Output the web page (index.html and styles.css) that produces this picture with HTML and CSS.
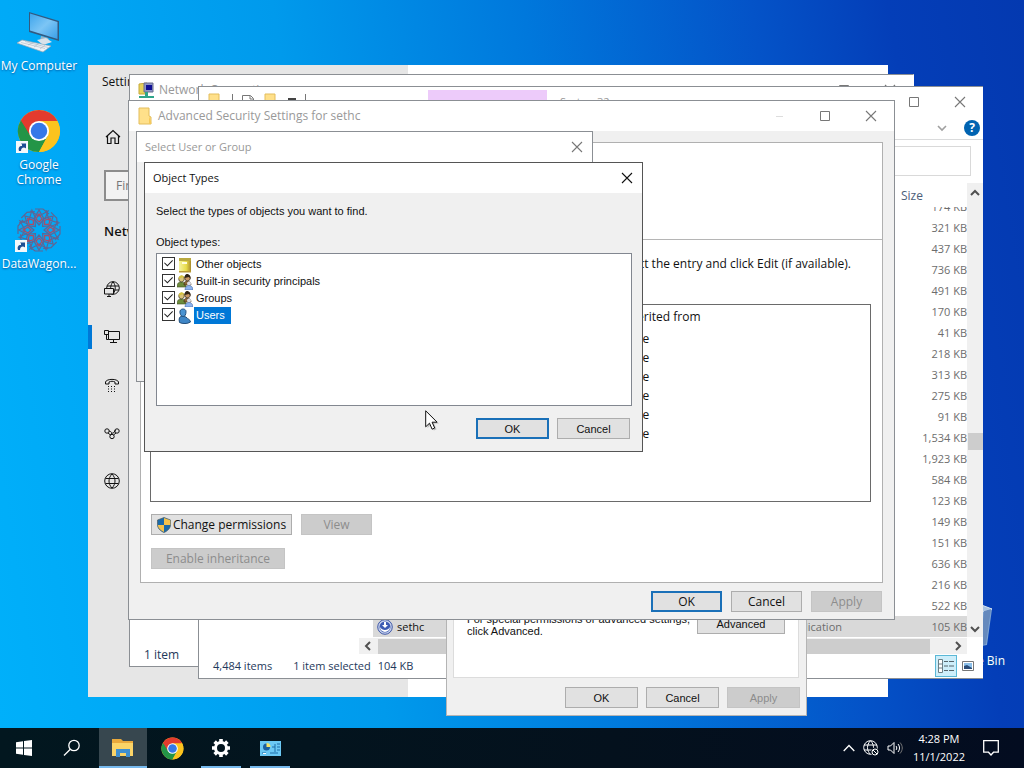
FILE: index.html
```html
<!DOCTYPE html>
<html lang="en">
<head>
<meta charset="utf-8">
<title>Desktop</title>
<link rel="stylesheet" href="styles.css">
</head>
<body>
<svg class="defs" aria-hidden="true">
  <defs>
    <linearGradient id="screen" x1="0" y1="0" x2="1" y2="1"><stop offset="0" stop-color="#3da5ec"/><stop offset=".5" stop-color="#7cc5f5"/><stop offset="1" stop-color="#3a9fe8"/></linearGradient>
    <linearGradient id="note" x1="0" y1="0" x2="1" y2="0"><stop offset="0" stop-color="#f6f3a0"/><stop offset=".6" stop-color="#e8dc4a"/><stop offset="1" stop-color="#a88a2c"/></linearGradient>
  </defs>
  <symbol id="i-close" viewBox="0 0 12 12"><path d="M1 1l10 10M11 1L1 11" fill="none" stroke="currentColor" stroke-width="1.1"/></symbol>
  <symbol id="i-max" viewBox="0 0 12 12"><path d="M1.500 1.500h9v9h-9z" fill="none" stroke="currentColor"/></symbol>
  <symbol id="i-folder" viewBox="0 0 16 18"><path d="M2 1h10v8l2 1v7H2z" fill="#ffe08a" stroke="#e3bd5c"/><path d="M12 9l2.500 7.500L12 17z" fill="#f6c95a"/></symbol>
  <symbol id="i-arrow" viewBox="0 0 12 12"><rect width="12" height="12" fill="#f5f8fb"/><path d="M3 10c-1-3 0-5 3-5V3l4 .2V7L8 6.500C6 6.500 5 8 5 10z" fill="#1f4f93"/><path d="M5 2.500h5v5z" fill="#1f4f93"/></symbol>
  <symbol id="i-chrome" viewBox="0 0 48 48">
    <circle cx="24" cy="24" r="23" fill="#fcc31e"/>
    <path d="M24 24L4.080 12.500A23 23 0 0 1 43.920 12.500z" fill="#e33b2e"/>
    <path d="M24 13h19.920L40 10 24 8z" fill="#e33b2e"/>
    <path d="M4.080 12.500A23 23 0 0 0 24 47l9.500-17.500L24 24z" fill="#239547"/>
    <path d="M14.500 29.500L4.080 12.500 24 13z" fill="#e33b2e"/>
    <path d="M4.080 12.500L14.500 29.500 20 34 10 30z" fill="#239547"/>
    <path d="M33.500 29.500L24 47A23 23 0 0 0 43.920 13H24z" fill="#fcc31e"/>
    <circle cx="24" cy="24" r="11" fill="#fff"/><circle cx="24" cy="24" r="9" fill="#3578e8"/>
  </symbol>
  <symbol id="i-group" viewBox="0 0 16 16">
    <path d="M0 13c0-4 2-5 4-5s5 1 5 5z" fill="#6d8c3c" stroke="#3d4c20" stroke-width=".6"/>
    <circle cx="4.500" cy="5" r="2.800" fill="#d9c27a" stroke="#2b2412" stroke-width=".6"/><path d="M1.600 5c0-5 6-5 6 0L6 3z" fill="#d5c23c"/>
    <path d="M7 11c0-3 1-4 3-4s4 1 4 4z" fill="#8d6a3a" stroke="#35250d" stroke-width=".6"/>
    <circle cx="10.500" cy="4" r="2.800" fill="#c99866" stroke="#1d1509" stroke-width=".6"/><path d="M7.500 4c0-6 6.500-5 6 1l-1.500-2z" fill="#2f2315"/>
    <circle cx="12" cy="9.500" r="2" fill="#dcdce6"/><path d="M8 16c0-3 2-4.500 4-4.500s4 1.500 4 4.500z" fill="#8db4ee" stroke="#4064a8" stroke-width=".6"/>
  </symbol>
</svg>

<main class="desktop">
  <a class="shortcut computer" href="#">
    <svg width="44" height="44" viewBox="0 0 44 44"><path d="M12 2l30 9v20L12 22z" fill="#335a80"/><path d="M13 3.500L40.500 12v17L13 20.500z" fill="url(#screen)"/><path d="M24 26l7 2 2 5-10-2z" fill="#9ab3c6"/><path d="M20 30l9-2 6 4-9 3z" fill="#d9e2ea"/><path d="M0 33l5-3 29 6-8 6z" fill="#eef2f6" stroke="#98a7b5" stroke-width=".7"/><path d="M4 32.500l24 6M8 31.500l23 6M11 35l5-2.500M17 37l5-3.500M23 39l5-4" stroke="#a9b6c3" stroke-width=".6"/></svg>
    <span>My Computer</span>
  </a>
  <a class="shortcut chrome" href="#">
    <span class="pic"><svg width="44" height="44"><use href="#i-chrome"/></svg><svg class="link-mark" width="12" height="12"><use href="#i-arrow"/></svg></span>
    <span>Google Chrome</span>
  </a>
  <a class="shortcut wagon" href="#">
    <span class="pic"><svg width="46" height="44" viewBox="-23 -22 46 44" fill="none" stroke="#5d6695" stroke-width="1.200">
      <g id="petal"><path d="M0-5l5-6-5-9-5 9zM-9-19l9 5 9-5-3 8M-4-21h8l6 5" /><path d="M0-8l3-3-3-5-3 5z" stroke="#b04a62"/></g>
      <use href="#petal" transform="rotate(45)"/><use href="#petal" transform="rotate(90)"/><use href="#petal" transform="rotate(135)"/><use href="#petal" transform="rotate(180)"/><use href="#petal" transform="rotate(225)"/><use href="#petal" transform="rotate(270)"/><use href="#petal" transform="rotate(315)"/></svg><svg class="link-mark" width="12" height="12"><use href="#i-arrow"/></svg></span>
    <span>DataWagon...</span>
  </a>
  <a class="shortcut recycle" href="#">
    <svg width="50" height="48" viewBox="0 0 50 48"><path d="M2 4l26-4 21 8-5 36-22 4-14-6z" fill="#7da4d4"/><path d="M2 4l26-4 21 8-22 6z" fill="#a9c3e2" stroke="#d3e1f0"/><path d="M41 10l7-2-5 35-6 2z" fill="#6589bd"/></svg>
    <span>Recycle Bin</span>
  </a>

  <section class="window settings">
    <div class="side">
      <div class="side-title">Settings</div>
      <svg class="home" width="16" height="16" viewBox="0 0 16 16" fill="none" stroke="#111" stroke-width="1.200"><path d="M1 8l7-6.500L15 8M2.500 7v7.500H6V9h4v5.500h3.500V7"/></svg>
      <input class="find" type="text" placeholder="Find a setting" aria-label="Find a setting">
      <h2>Network &amp; Internet</h2>
      <nav>
        <a href="#" aria-label="Status"><svg width="16" height="16" viewBox="0 0 16 16"><circle cx="9" cy="7" r="6.300"/><path d="M3 5h12M3 9h12M9 .700c-3 4-3 8-1 12.600M9 .700c3 4 3 8 0 12.600"/><path d="M.500 7.500h9v5.500h-9z" fill="#e6e6e6"/><path d="M3 15.500h4M5 13v2.500"/></svg></a>
        <a href="#" class="current" aria-label="Ethernet"><svg width="16" height="16" viewBox="0 0 16 16"><path d="M4.500 2.500h11v8h-11zM.500 1.500h4v4h-4zM2.500 5.500v5h2M9.500 10.500v3M6 13.500h7"/></svg></a>
        <a href="#" aria-label="Dial-up"><svg width="16" height="16" viewBox="0 0 16 16"><path d="M1.500 7V5c1-3.500 12-3.500 13 0v2h-3.500V5c-2-1-4-1-6 0v2z"/><path d="M4 9.500h8M4 12h8M4 14.500h8" stroke-dasharray="1 2"/></svg></a>
        <a href="#" aria-label="VPN"><svg width="16" height="16" viewBox="0 0 16 16"><circle cx="3" cy="6" r="2.200"/><circle cx="13" cy="6" r="2.200"/><circle cx="8" cy="11.500" r="2.200"/><path d="M4 8l2.500 2M5 6c2 0 3 3 4.500 2L11.500 5M9.500 10L12 8M6.500 10L8 8"/></svg></a>
        <a href="#" aria-label="Proxy"><svg width="16" height="16" viewBox="0 0 16 16"><circle cx="8" cy="8" r="7.300"/><path d="M1.500 5.500h13M1.500 10.500h13M8 1c-4 4-4 10 0 14M8 1c4 4 4 10 0 14"/></svg></a>
      </nav>
    </div>
  </section>

  <section class="window network">
    <header class="titlebar">
      <svg width="17" height="17" viewBox="0 0 17 17"><path d="M1 2l8-1v11H1z" fill="#e8d25a" stroke="#c6a93a"/><path d="M6 1h9v9H6z" fill="#8d95c9" stroke="#6b6e8c"/><path d="M8 3h6v5H8z" fill="#101094"/><path d="M1 14h15v2H1zM7 10h3v6H7z" fill="#2fa58a"/></svg>
      <h1>Network Connections</h1>
      <span class="caption"><button aria-label="Maximize"><svg width="12" height="12"><use href="#i-max"/></svg></button><button aria-label="Close"><svg width="12" height="12"><use href="#i-close"/></svg></button></span>
    </header>
    <footer>1 item</footer>
  </section>

  <section class="window explorer">
    <header class="titlebar">
      <div class="quick"><svg width="16" height="18"><use href="#i-folder"/></svg><i></i><svg width="12" height="16" viewBox="0 0 12 16"><path d="M.500 1.500h8l3 3v11H.500zM8 2v3h3" fill="#fff" stroke="#777"/></svg><svg width="16" height="18"><use href="#i-folder"/></svg><b></b><i></i></div>
      <span class="manage">Manage</span>
      <h1>System32</h1>
      <span class="caption"><button aria-label="Maximize"><svg width="12" height="12"><use href="#i-max"/></svg></button><button aria-label="Close"><svg width="12" height="12"><use href="#i-close"/></svg></button></span>
    </header>
    <div class="ribbon">
      <svg width="10" height="10" viewBox="0 0 10 10"><path d="M1 3l4 4 4-4" fill="none" stroke="#a0a0a0" stroke-width="1.600"/></svg>
      <button class="help" aria-label="Help">?</button>
    </div>
    <div class="address"><input type="text" aria-label="Search System32"></div>
    <div class="browse">
      <div class="pane">
        <div class="size-head">Size</div>
        <div class="rows">
          <table>
            <tr><td></td><td></td><td>174 KB</td></tr>
            <tr><td></td><td></td><td>321 KB</td></tr>
            <tr><td></td><td></td><td>437 KB</td></tr>
            <tr><td></td><td></td><td>736 KB</td></tr>
            <tr><td></td><td></td><td>491 KB</td></tr>
            <tr><td></td><td></td><td>170 KB</td></tr>
            <tr><td></td><td></td><td>41 KB</td></tr>
            <tr><td></td><td></td><td>218 KB</td></tr>
            <tr><td></td><td></td><td>313 KB</td></tr>
            <tr><td></td><td></td><td>275 KB</td></tr>
            <tr><td></td><td></td><td>91 KB</td></tr>
            <tr><td></td><td></td><td>1,534 KB</td></tr>
            <tr><td></td><td></td><td>1,923 KB</td></tr>
            <tr><td></td><td></td><td>584 KB</td></tr>
            <tr><td></td><td></td><td>123 KB</td></tr>
            <tr><td></td><td></td><td>149 KB</td></tr>
            <tr><td></td><td></td><td>151 KB</td></tr>
            <tr><td></td><td></td><td>636 KB</td></tr>
            <tr><td></td><td></td><td>216 KB</td></tr>
            <tr><td></td><td></td><td>522 KB</td></tr>
            <tr class="picked"><td><span class="file"><svg width="16" height="16" viewBox="0 0 16 16"><circle cx="8" cy="8" r="7.300" fill="#c9d3ec" stroke="#4059a8"/><circle cx="8" cy="8" r="5.500" fill="#3c5bb4"/><path d="M3 8a5 5 0 0 0 10 0c-1 2-3 3-5 3S4 10 3 8zM7 3h2v3h2L8 9 5 6h2z" fill="#fff"/></svg>sethc</span></td><td>Application</td><td>105 KB</td></tr>
          </table>
        </div>
      </div>
      <div class="vscroll"><svg width="10" height="8" viewBox="0 0 10 8"><path d="M1 6l4-4 4 4" fill="none" stroke="#505050" stroke-width="2"/></svg><span></span><svg width="10" height="8" viewBox="0 0 10 8"><path d="M1 2l4 4 4-4" fill="none" stroke="#505050" stroke-width="2"/></svg></div>
    </div>
    <div class="hscroll"><svg width="8" height="10" viewBox="0 0 8 10"><path d="M6 1L2 5l4 4" fill="none" stroke="#505050" stroke-width="2"/></svg><span></span><svg width="8" height="10" viewBox="0 0 8 10"><path d="M2 1l4 4-4 4" fill="none" stroke="#505050" stroke-width="2"/></svg></div>
    <footer><span>4,484 items</span><span class="sel">1 item selected</span><span class="kb">104 KB</span>
      <button class="view on" aria-label="Details"><svg width="16" height="14" viewBox="0 0 16 14"><path d="M.500.500h4v13h-4zM.500 5h4M.500 9h4" fill="#fff" stroke="#6b7f86"/><path d="M6 2.500h4M11 2.500h5M6 7h4M11 7h5M6 11.500h4M11 11.500h5" stroke="#55646b"/></svg></button>
      <button class="view" aria-label="Thumbnails"><svg width="12" height="10" viewBox="0 0 12 10"><path d="M.500.500h11v9H.500z" fill="#fff" stroke="#777"/><path d="M2 2h8v6H2z" fill="#8cc0ea"/><path d="M2 5l3-1 5 3v1H2z" fill="#2b4c77"/></svg></button>
    </footer>
  </section>

  <section class="window props ms">
    <div class="props-panel">
      <p>For special permissions or advanced settings, click Advanced.</p>
      <button class="btn">Advanced</button>
    </div>
    <div class="actions"><button class="btn">OK</button><button class="btn">Cancel</button><button class="btn" disabled>Apply</button></div>
  </section>

  <section class="window advanced">
    <header class="titlebar">
      <svg width="16" height="18"><use href="#i-folder"/></svg>
      <h1>Advanced Security Settings for sethc</h1>
      <span class="caption"><button class="faint" aria-label="Minimize"><svg width="12" height="12" viewBox="0 0 12 12"><path d="M3 6.500h7" stroke="#ddd"/></svg></button><button aria-label="Maximize"><svg width="12" height="12"><use href="#i-max"/></svg></button><button aria-label="Close"><svg width="12" height="12"><use href="#i-close"/></svg></button></span>
    </header>
    <div class="adv-panel">
      <div class="adv-top"></div>
      <div class="adv-body">
        <p>select the entry and click Edit (if available).</p>
        <div class="entries">
          <table>
            <tr><th>Inherited from</th></tr>
            <tr><td>None</td></tr><tr><td>None</td></tr><tr><td>None</td></tr><tr><td>None</td></tr><tr><td>None</td></tr><tr><td>None</td></tr>
          </table>
        </div>
        <div class="btn-row"><button class="btn change"><svg width="14" height="16" viewBox="0 0 14 16"><path d="M7 .500L13.500 3v4.500c0 4-3 6.500-6.500 8-3.500-1.500-6.500-4-6.500-8V3z" fill="#1b6aa8" stroke="#4a5a60" stroke-width=".7"/><path d="M7 1v7h6.300V3.200zM7 8v7C4 13.700 1.200 11.500.800 8z" fill="#f5c24b"/></svg>Change permissions</button><button class="btn look" disabled>View</button></div>
        <div class="btn-row"><button class="btn inherit" disabled>Enable inheritance</button></div>
      </div>
    </div>
    <div class="actions"><button class="btn default">OK</button><button class="btn">Cancel</button><button class="btn" disabled>Apply</button></div>
  </section>

  <section class="window select">
    <header class="titlebar"><h1>Select User or Group</h1><span class="caption"><button aria-label="Close"><svg width="12" height="12"><use href="#i-close"/></svg></button></span></header>
  </section>

  <section class="window types ms" role="dialog" aria-labelledby="types-title">
    <header class="titlebar"><h1 id="types-title">Object Types</h1><span class="caption"><button aria-label="Close"><svg width="12" height="12"><use href="#i-close"/></svg></button></span></header>
    <div class="types-body">
      <p>Select the types of objects you want to find.</p>
      <p class="label">Object types:</p>
      <div class="type-list">
        <label><input type="checkbox" checked><svg width="16" height="16" viewBox="0 0 16 16"><path d="M2 1h12v14H2z" fill="url(#note)"/><path d="M2 1h12v3H2z" fill="#b9a93f"/><path d="M5 5h5v2H5z" fill="#fffde0"/><path d="M2 14h12v1.500H2z" fill="#b99a35"/></svg><span>Other objects</span></label>
        <label><input type="checkbox" checked><svg width="16" height="16"><use href="#i-group"/></svg><span>Built-in security principals</span></label>
        <label><input type="checkbox" checked><svg width="16" height="16"><use href="#i-group"/></svg><span>Groups</span></label>
        <label class="focused"><input type="checkbox" checked><svg width="16" height="16" viewBox="0 0 16 16"><path d="M2.500 14.500c-1-4 0-6 2.500-6.500l4 1c2 2.500 4 2 4.500 5-3 2-8 2-11 .500z" fill="#3f86c6" stroke="#24507c"/><path d="M3 3c1-3 6-2.500 6 .500s-1 5-3 5-3.500-3-3-5.500z" fill="#4a93d2" stroke="#24507c"/></svg><span>Users</span></label>
      </div>
    </div>
    <div class="actions"><button class="btn default">OK</button><button class="btn">Cancel</button></div>
  </section>

  <svg class="pointer" width="16" height="22" viewBox="0 0 16 22"><path d="M2.500 2v16l3.800-3.600 2.600 6 2.600-1.200-2.600-5.800h5z" fill="#888" opacity=".5"/><path d="M.700.800v16l3.800-3.600 2.600 6 2.600-1.200-2.600-5.800h5z" fill="#fff" stroke="#111"/></svg>
</main>

<nav class="taskbar" aria-label="Taskbar">
  <button class="task start" aria-label="Start"><svg width="16" height="16" viewBox="0 0 16 16" fill="#fff"><path d="M0 2.200L7 1.200v6.300H0zM8 1l8-1v7.500H8zM0 8.500h7v6.300l-7-1zM8 8.500h8V16l-8-1.100z"/></svg></button>
  <button class="task search" aria-label="Search"><svg width="18" height="18" viewBox="0 0 18 18" fill="none" stroke="#fff" stroke-width="1.300"><circle cx="11" cy="6.500" r="5.200"/><path d="M7.300 10.200L1 16.500"/></svg></button>
  <button class="task open active" aria-label="File Explorer"><svg width="22" height="18" viewBox="0 0 22 18"><path d="M0 0h9l2 2h10v15H0z" fill="#e9a93c"/><path d="M0 4h21v13H0z" fill="#fbd467"/><path d="M4 10h14v8h-4v-4H8v4H4z" fill="#3f8fd0"/></svg></button>
  <button class="task" aria-label="Chrome"><svg width="23" height="23"><use href="#i-chrome"/></svg></button>
  <button class="task open" aria-label="Settings"><svg width="20" height="20" viewBox="-10 -10 20 20"><circle r="5.500" fill="none" stroke="#fff" stroke-width="3"/><g stroke="#fff" stroke-width="3.600"><path id="tooth" d="M0-6v-3M0 6v3"/><use href="#tooth" transform="rotate(45)"/><use href="#tooth" transform="rotate(90)"/><use href="#tooth" transform="rotate(135)"/></g></svg></button>
  <button class="task open" aria-label="Control Panel"><svg width="21" height="15" viewBox="0 0 21 15"><path d="M0 0h21v15H0z" fill="#6cc8f4"/><circle cx="6.500" cy="6" r="3.500" fill="#1b5fa0"/><path d="M6.500 6V2a4 4 0 0 1 4 4z" fill="#f4e36a"/><path d="M12 6h3M17 3h3M17 6h3M17 9h3M15 3v8M2 12h4M10 12h8" stroke="#1c6ca8"/><path d="M3 12.500h3" stroke="#fff"/></svg></button>
  <div class="tray">
    <svg width="12" height="8" viewBox="0 0 12 8"><path d="M.700 7L6 1.500 11.300 7" fill="none" stroke="#fff" stroke-width="1.300"/></svg>
    <svg width="16" height="16" viewBox="0 0 16 16" fill="none" stroke="#fff"><circle cx="7.500" cy="7.500" r="6.800"/><path d="M1 5h13M1 10h8M7.500.700c-4 4-4 10 0 13.600M7.500.700c2.500 2.500 3 5 3 7"/><circle cx="12" cy="12" r="4" fill="#04101c" stroke="none"/><circle cx="12" cy="12" r="3"/><path d="M10 10l4 4"/></svg>
    <svg width="17" height="14" viewBox="0 0 17 14" fill="none" stroke="#fff"><path d="M1 5h2.500L7 1.500v11L3.500 9H1z"/><path d="M9 5c1 1 1 3 0 4M11 3c2 2.500 2 5.500 0 8"/><path d="M13 1.500c3 3.500 3 7.500 0 11" stroke="#777"/></svg>
    <time>4:28 PM<br>11/1/2022</time>
    <svg class="note" width="16" height="16" viewBox="0 0 16 16"><path d="M.700.700h14.600v11.500H10.500L8 15l-2.500-2.800H.700z" fill="none" stroke="#fff" stroke-width="1.300"/></svg>
  </div>
</nav>
</body>
</html>
```
FILE: styles.css
```css
* { box-sizing: border-box; }
body {
  margin: 0;
  height: 100vh;
  display: flex;
  flex-direction: column;
  overflow: hidden;
  font: 12px/16px "Open Sans", "Noto Sans", sans-serif;
  color: #111;
}
h1, h2, p { margin: 0; font-size: inherit; font-weight: 400; }
button, input { font: inherit; color: inherit; }
svg { display: block; flex: none; }
table { border-collapse: collapse; }
.defs { position: absolute; width: 0; height: 0; }

.desktop {
  position: relative;
  flex: 1;
  overflow: hidden;
  background: linear-gradient(81deg, #00b0fa 0%, #00a8f6 14%, #009aec 34%, #0078dc 56%, #0453c8 76%, #043eb8 88%, #0439b0 100%);
}

/* Desktop shortcuts */
.shortcut {
  position: absolute;
  left: 0;
  width: 78px;
  display: flex;
  flex-direction: column;
  align-items: center;
  gap: 4px;
  color: #fff;
  line-height: 15px;
  text-align: center;
  text-decoration: none;
  text-shadow: 0 1px 2px #0458a0;
}
.computer { top: 10px; }
.chrome { top: 109px; padding: 0 16px; }
.wagon { top: 208px; }
.recycle { left: 930px; top: 601px; width: 75px; text-align: right; align-items: flex-end; }
.recycle svg { margin-right: 12px; }
.pic { position: relative; }
.link-mark { position: absolute; left: -1px; bottom: 0; }

/* Windows */
.window { position: absolute; display: flex; flex-direction: column; background: #fff; border: 1px solid #8b8f94; }
.titlebar { display: flex; align-items: center; height: 30px; flex: none; background: #fff; color: #999; padding-left: 8px; }
.titlebar h1 { white-space: nowrap; }
.caption { display: flex; margin-left: auto; }
.caption button { width: 46px; height: 30px; padding: 0; border: 0; background: none; display: grid; place-items: center; color: #777; }
.caption svg { margin-bottom: 1px; }

.btn {
  height: 21px;
  padding: 0;
  border: 1px solid #adadad;
  background: #e1e1e1;
  color: #111;
  line-height: 16px;
  display: flex;
  align-items: center;
  justify-content: center;
}
.btn.default { border: 2px solid #1a70b8; }
.btn:disabled { background: #ccc; border-color: #c4c4c4; color: #8c8c8c; }
.actions { display: flex; justify-content: flex-end; }
.ms { font: 11px/13px "Liberation Sans", Arial, sans-serif; background: #f0f0f0; }

.settings { left: 88px; top: 65px; width: 800px; height: 632px; border: 0; }
.side { width: 320px; flex: 1; background: #e6e6e6; padding: 9px 16px; }
.side-title { margin-left: -2px; }
.home { margin: 39px 0 25px 1px; }
.find { display: block; width: 272px; height: 31px; padding: 0 10px; border: 2px solid #8c8c8c; background: #f2f2f2; color: #777; }
.side h2 { font-weight: 600; font-size: 13px; margin: 22px 0 26px; }
.side nav a { display: flex; align-items: center; height: 48px; margin-left: -16px; padding-left: 16px; }
.side nav svg { fill: none; stroke: #111; }
.current { background: linear-gradient(#0078d7, #0078d7) left center / 4px 24px no-repeat; }

.network { left: 129px; top: 74px; width: 785px; height: 593px; border-right-color: #fff; }
.network .titlebar { gap: 4px; }
.network footer { margin-top: auto; padding: 0 14px 3px; color: #1e395b; }

.explorer { left: 198px; top: 86px; width: 785px; height: 593px; border-right: 0; color: #6d6d6d; font-size: 11px; }
.quick { display: flex; align-items: center; gap: 9px; width: 221px; }
.quick i { width: 1px; height: 16px; background: #777; }
.quick b { width: 8px; height: 8px; border-top: 2px solid #444; }
.manage { align-self: flex-end; width: 119px; height: 27px; padding-top: 7px; margin-right: 13px; background: #edcbfa; text-align: center; color: #6b4b7c; }
.ribbon { display: flex; align-items: center; justify-content: flex-end; gap: 17px; height: 23px; padding-right: 3px; border-bottom: 1px solid #dadbdc; flex: none; }
.help { width: 16px; height: 16px; padding: 0; border: 0; border-radius: 8px; background: #0063b1; color: #fff; font-size: 12px; font-weight: 700; line-height: 16px; }
.address { padding: 6px 12px 7px; flex: none; display: flex; justify-content: flex-end; }
.address input { width: 260px; height: 30px; border: 1px solid #d9d9d9; }
.browse { display: flex; flex: 1; min-height: 0; }
.pane { flex: 1; display: flex; flex-direction: column; padding-left: 174px; min-width: 0; }
.size-head { width: 66px; margin-left: auto; padding: 5px 0 0; height: 24px; flex: none; color: #4c607a; font-size: 12px; }
.rows { flex: 1; min-height: 0; overflow: hidden; display: flex; flex-direction: column; justify-content: flex-end; }
.rows table { width: 100%; }
.rows tr { height: 21px; }
.rows td { padding: 0; height: 21px; line-height: 16px; white-space: nowrap; }
.rows td:nth-child(2) { width: 220px; text-align: right; }
.rows td:nth-child(3) { width: 125px; text-align: right; }
.picked { background: #d9d9d9; }
.file { display: flex; gap: 4px; padding-left: 4px; color: #111; }
.vscroll { width: 16px; display: flex; flex-direction: column; align-items: center; justify-content: space-between; background: #f0f0f0; padding: 6px 0 4px; }
.vscroll span { width: 15px; height: 17px; background: #cdcdcd; margin-top: 60px; }
.hscroll { display: flex; align-items: center; gap: 6px; height: 17px; flex: none; margin: 0 16px 0 160px; padding: 0 5px; background: #f0f0f0; border-top: 1px solid #fff; }
.hscroll span { flex: 1; height: 15px; background: #cdcdcd; margin-right: 18px; }
.explorer footer { display: flex; align-items: center; height: 24px; flex: none; padding: 0 4px 0 14px; color: #1e395b; }
.sel { margin-left: 21px; }
.kb { margin-left: 7px; margin-right: auto; }
.view { width: 22px; height: 22px; padding: 0; border: 1px solid transparent; background: none; display: grid; place-items: center; }
.view.on { border-color: #5bb8d6; background: #cdeefa; }

.props { left: 446px; top: 590px; width: 361px; height: 126px; padding: 0 6px 7px; border-color: #b4b4b4; }
.props-panel { flex: 1; display: flex; justify-content: space-between; padding: 21px 13px 0; margin: 0 1px 9px 0; background: #fff; border: 1px solid #dcdcdc; }
.props-panel p { width: 229px; line-height: 12px; }
.props-panel .btn { width: 88px; }
.props .actions { gap: 8px; }
.props .actions .btn { width: 73px; }

.advanced { left: 128px; top: 100px; width: 767px; height: 520px; background: #f0f0f0; }
.advanced .titlebar { gap: 5px; }
.adv-panel { margin: 11px 11px 8px; flex: 1; background: #fff; border: 1px solid #b0b0b0; }
.adv-top { height: 97px; border-bottom: 1px solid #b5b5b5; }
.adv-body { padding: 16px 11px 0 9px; }
.adv-body p { padding-right: 20px; text-align: right; white-space: nowrap; }
.entries { height: 198px; margin: 32px 0 12px; padding-left: 468px; border: 1px solid #6a6a6a; }
.entries th { height: 24px; font-weight: 400; }
.entries th, .entries td { padding: 0; text-align: left; white-space: nowrap; }
.entries td { height: 19px; }
.btn-row { display: flex; gap: 9px; margin: 0 0 13px 1px; }
.change { width: 141px; gap: 2px; }
.look { width: 71px; }
.inherit { width: 134px; }
.advanced .actions { padding: 0 12px 9px; gap: 9px; }
.advanced .actions .btn { width: 71px; }

.select { left: 136px; top: 131px; width: 457px; height: 251px; background: #f0f0f0; }
.select .titlebar { font-size: 11px; }
.select .caption button { width: 30px; }

.types { left: 144px; top: 162px; width: 499px; height: 290px; border-color: #555; }
.types .titlebar { font: 11px/16px "Open Sans", sans-serif; color: #111; }
.types .caption button { width: 30px; color: #111; }
.types-body { flex: 1; display: flex; flex-direction: column; padding: 12px 10px 12px 11px; }
.label { margin: 18px 0 4px; }
.type-list { flex: 1; padding: 2px 5px; border: 1px solid #828790; background: #fff; }
.type-list label { display: flex; align-items: center; width: fit-content; height: 17px; }
.type-list svg { margin: 0 1px 0 2px; }
.type-list span { padding: 2px; }
.focused span { background: #0078d7; color: #fff; padding-right: 6px; }
.type-list input { appearance: none; position: relative; width: 13px; height: 13px; margin: 0 0 2px; border: 1px solid #333; background: #fff; }
.type-list input:checked::after { content: ""; position: absolute; inset: 1px; background: #222; clip-path: polygon(0 45%, 8% 38%, 38% 68%, 92% 12%, 100% 20%, 38% 84%); }
.types .actions { padding: 0 12px 12px; gap: 8px; }
.types .actions .btn { width: 73px; }

.pointer { position: absolute; left: 425px; top: 410px; }

/* Taskbar */
.taskbar { display: flex; height: 40px; flex: none; background: linear-gradient(90deg, #02171f, #04111d 60%, #030c20); color: #fff; }
.task { width: 40px; height: 40px; margin-left: 9px; padding: 0; border: 0; background: none; display: grid; place-items: center; }
.start, .search { width: 48px; margin: 0; }
.open { border-bottom: 2px solid #76b9ed; padding-top: 2px; }
.active { width: 48px; margin: 0 -4px 0 3px; background: #37474f; }
.tray { margin-left: auto; display: flex; align-items: center; gap: 8px; padding-right: 25px; }
.tray time { margin-left: 1px; text-align: center; font-size: 11px; line-height: 18px; }
.note { margin-left: 10px; }
```
